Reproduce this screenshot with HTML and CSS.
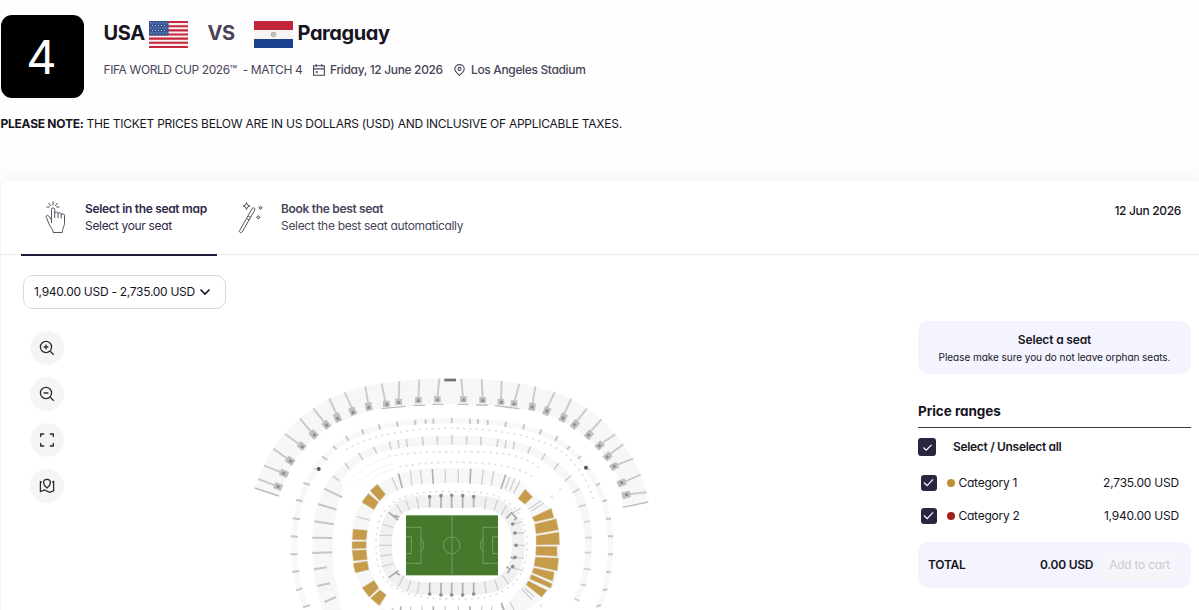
FILE: index.html
```html
<!DOCTYPE html>
<html lang="en">
<head>
<meta charset="UTF-8">
<title>USA vs Paraguay - Seat selection</title>
<meta name="viewport" content="width=device-width, initial-scale=1.0">
<link rel="stylesheet" href="styles.css">
</head>
<body>

<header class="match">
    <div class="match-number">4</div>
    <div class="match-info">
        <h1 class="teams">
            <span class="team-home">USA</span>
            <svg class="flag" viewBox="0 0 39 27" preserveAspectRatio="none">
                <rect width="39" height="27" fill="#f6eef0"/>
                <path d="M0 1h39M0 5.2h39M0 9.4h39M0 13.5h39M0 17.6h39M0 21.8h39M0 26h39" stroke="#c5283d" stroke-width="2.1"/>
                <rect width="19.5" height="14.5" fill="#36548f"/>
                <path d="M1.5 2h17M3 4.5h15M1.5 7h17M3 9.5h15M1.5 12h17" stroke="#b9c7e2" stroke-width="1" stroke-dasharray="1 2"/>
            </svg>
            <span class="vs">VS</span>
            <svg class="flag" viewBox="0 0 39 27" preserveAspectRatio="none">
                <rect width="39" height="27" fill="#f5f5f6"/>
                <rect width="39" height="9" fill="#c2243c"/>
                <rect y="18" width="39" height="9" fill="#1b418c"/>
                <circle cx="19.5" cy="13.5" r="2.3" fill="#d5dbc9" stroke="#8d9688" stroke-width=".8"/>
                <circle cx="19.5" cy="13.5" r=".8" fill="#8b8f4c"/>
            </svg>
            <span class="team-away">Paraguay</span>
        </h1>
        <div class="details">
            <span class="competition">FIFA WORLD CUP 2026™ &nbsp;- MATCH 4</span>
            <svg class="icon-date" viewBox="0 0 12 12">
                <path d="M.6 1.7h10.8v9.6H.6zM.6 4.9h10.8M3.2 0v3M8.8 0v3"/>
                <path d="M2.8 7.2h2v1.6h-2z" class="solid"/>
            </svg>
            <span class="date">Friday, 12 June 2026</span>
            <svg class="icon-pin" viewBox="0 0 11 12">
                <path d="M5.5 11.4C3 9.2.8 7.2.8 4.9a4.7 4.3 0 0 1 9.4 0C10.2 7.2 8 9.2 5.5 11.4z"/>
                <circle cx="5.5" cy="4.9" r="1.5"/>
            </svg>
            <span class="venue">Los Angeles Stadium</span>
        </div>
    </div>
</header>

<p class="note"><b>PLEASE NOTE:</b> THE TICKET PRICES BELOW ARE IN US DOLLARS (USD) AND INCLUSIVE OF APPLICABLE TAXES.</p>

<main class="panel">
    <nav class="tabs">
        <div class="tab active">
            <svg class="icon-hand" viewBox="0 0 22 34">
                <path d="M6.5 22V8.5a1.6 1.6 0 0 1 3.2 0V17M9.7 12.5c0-2 3.3-2 3.3 0V17M13 13c0-1.7 3.2-1.7 3.2 0v4.5M16.2 14c0-1.5 3.3-1.5 3.3.3v8.2c0 2.5-1.8 3.5-2.2 9H8.2c-.2-3.5-2.5-4.5-3.7-7.5L1.3 16.5c-.8-2 1.5-3 2.6-1.3L6.5 19"/>
                <path d="M8 .5v4M3.5 2l2.3 3M12.5 2l-2.3 3M1.5 6h3.2M14.5 6h-3.2"/>
            </svg>
            <div class="tab-text">
                <strong>Select in the seat map</strong>
                <span>Select your seat</span>
            </div>
        </div>
        <div class="tab">
            <svg class="icon-wand" viewBox="0 0 26 34">
                <path d="M14.3 7.3c.9-1.3 3.3.1 2.5 1.6L4.2 31c-1 1.6-3.5.2-2.6-1.4zM8.5 17.5l2.7 1.5M10 15l2.7 1.5"/>
                <path d="M8.5 1.5l1 2.5 2.5 1-2.5 1-1 2.5-1-2.5-2.5-1 2.5-1zM22.5 5l.6 1.2 1.2.6-1.2.6-.6 1.2-.6-1.2-1.2-.6 1.2-.6zM20.3 14.5l.6 1.2 1.2.6-1.2.6-.6 1.2-.6-1.2-1.2-.6 1.2-.6z"/>
            </svg>
            <div class="tab-text">
                <strong>Book the best seat</strong>
                <span>Select the best seat automatically</span>
            </div>
        </div>
        <time class="tab-date">12 Jun 2026</time>
    </nav>

    <div class="content">
        <section class="map-side">
            <button class="price-filter">1,940.00 USD - 2,735.00 USD
                <svg viewBox="0 0 12 8"><path d="M1.5 1.5L6 6l4.5-4.5"/></svg>
            </button>

            <div class="map-row">
                <div class="map-tools">
                    <button><svg viewBox="0 0 16 16"><circle cx="7" cy="7" r="5.6"/><path d="M11.2 11.2l3.6 3.6M7 4.6v4.8M4.6 7h4.8"/></svg></button>
                    <button><svg viewBox="0 0 16 16"><circle cx="7" cy="7" r="5.6"/><path d="M11.2 11.2l3.6 3.6M4.6 7h4.8"/></svg></button>
                    <button><svg viewBox="0 0 16 16"><path d="M1.7 5V2h3.5M10.8 2h3.5v3M14.3 11v3h-3.5M5.2 14H1.7v-3"/></svg></button>
                    <button><svg viewBox="0 0 16 16"><path d="M8 10C6.2 8.6 4.6 7 4.6 4.8a3.4 3.4 0 0 1 6.8 0C11.4 7 9.8 8.6 8 10zM3 4.3l-1.6-.6v9.8L5.5 12l5 2.3 4.1-1.5V3.5L13 4"/></svg></button>
                </div>

                <svg class="stadium" viewBox="0 0 1260 735">
                    <!-- upper tier -->
                    <path class="stand" d="M45 368L55 340 72 300 100 250 135 205 180 160 220 130 268 100 313 82 375 63 425 55 478 48 538 43 600 40H664L724 43 784 48 838 55 887 65 944 80 993 100 1041 130 1084 162 1126 208 1150 238 1179 280 1202 328 1220 380 1224 411 1148 427 1143 360 1125 318 1102 285 1080 255 1047 225 1005 190 970 170 925 150 885 138 835 130 780 124 740 120 682 118H606L550 120 495 125 440 130 390 138 345 152 300 170 265 188 230 215 195 248 160 290 140 330 125 370 117 393z"/>
                    <path class="rows" d="M430 72Q630 40 840 72M433 86Q630 56 838 86M436 100Q630 72 836 100M440 113Q630 88 834 113M170 180Q250 115 360 78M190 200Q275 130 375 95M205 214Q290 145 385 112M1080 175Q1010 110 905 78M1065 195Q990 128 895 95M1050 210Q975 145 890 112M75 345Q105 270 150 215M100 360Q125 290 175 235M1185 350Q1160 285 1115 225M1165 360Q1135 290 1090 240"/>
                    <path class="aisle" d="M55 342L105 361M72 302L122 321M100 251L142 281M135 207L178 238M180 161L214 201M220 130L253 172M268 101L291 150M314 82L336 130M376 64L385 118M425 56L436 110M478 48L476 105M538 44L535 99M598 41L592 98M664 42L669 98M725 43L728 98M785 48L783 105M838 56L823 110M886 65L877 118M944 82L922 128M993 102L971 150M1041 131L1007 172M1084 163L1049 203M1126 208L1082 237M1150 238L1106 270M1179 281L1127 301M1202 329L1149 352M1220 382L1165 388"/>
                    <path class="vomitory" d="M103 360L126 369M120 320L144 330M140 280L161 295M176 236L194 250M212 199L230 217M251 170L267 188M287 146L298 170M333 128L343 150M384 113L388 137M439 107V126M476 101V120M535 96V115M592 94V112M670 94V112M728 96V114M783 101V119M822 106V124M878 114L875 137M925 127L915 150M975 147L964 170M1013 168L996 189M1055 200L1039 219M1088 233L1070 250M1112 266L1094 282M1133 299L1112 310M1157 349L1133 358M1171 386L1146 393"/>
                    <path class="vomitory-hole" d="M110 363l8 4M127 323l8 4M148 286l8 5M184 243l6 5M220 207l6 6M257 177l6 7M291 156l4 9M337 138l4 9M386 123v8M441 114v8M476 109v7M535 103v8M593 101v8M671 101v8M728 103v8M784 108v8M822 113v8M877 122l-1 8M922 134l-3 9M971 155l-4 8M1006 176l-5 6M1048 207l-5 6M1082 240l-7 5M1105 273l-6 5M1126 302l-7 4M1149 352l-8 3M1164 388l-9 2"/>
                    <path class="rail" d="M424 131L496 124M520 121H555M577 118H609M654 118H686M708 120H743M765 122L838 131M44 369L117 393M1148 427L1225 411"/>
                    <path class="booth" d="M613 45H648"/>

                    <!-- suites -->
                    <path class="ring thin" d="M200 728C175 675 162 610 162 540C162 440 190 350 260 273C335 190 470 167 635 167S930 190 1010 273C1080 350 1112 440 1112 540C1112 610 1100 670 1075 728"/>
                    <path class="tick" d="M189 727L210 720M168 676L188 670M156 621L178 618M152 568H173M152 514L174 515M158 460L180 463M168 405L188 409M190 354L210 360M246 274L262 285M279 244L290 253M317 213L326 227M366 193L371 208M417 178L420 194M471 170L473 185M526 164V180M557 163V176M580 161V176M635 159V175M690 161V176M714 163V176M743 165V180M798 170L796 186M852 178L850 193M904 193L899 208M953 214L945 227M990 244L981 253M1023 273L1014 281M1080 355L1068 361M1101 406L1087 409M1113 461H1098M1119 514H1104M1119 568H1104M1112 620L1098 621M1102 673L1088 676M1082 720L1069 725"/>
                    <circle class="dot" cx="236" cy="312" r="6"/>
                    <circle class="dot" cx="1038" cy="308" r="6"/>
                    <path class="tick thin-tick" d="M218 309L232 315M1043 311L1050 315"/>
                    <path class="beads" d="M318 255C400 205 520 190 635 190S865 205 950 250C1000 280 1040 335 1062 405"/>
                    <path class="beads" d="M445 274C530 258 740 252 828 273C860 282 880 295 900 310"/>
                    <path class="beads" d="M478 306C560 288 720 286 805 306C845 315 865 325 880 336"/>
                    <path class="row-line" d="M325 350C370 305 405 287 445 278M345 360C390 320 420 305 455 298M365 365C400 335 430 322 462 312"/>

                    <!-- middle tier -->
                    <path class="stand" d="M250 735C225 680 217 610 217 540C217 470 230 410 258 360C290 305 340 270 400 245C470 218 560 212 635 212S800 216 875 245C935 270 985 315 1020 373C1045 420 1056 480 1056 540C1056 610 1040 665 1010 715L1000 700C1025 655 1035 600 1035 540C1035 485 1020 430 998 383C965 330 920 290 863 265C800 242 710 240 635 240S470 246 410 265C360 285 330 310 306 345C310 360 306 390 300 400C285 440 278 500 278 540C278 600 285 660 305 735z"/>
                    <path class="rows" d="M230 500Q235 430 275 375M244 505Q250 435 285 385M258 508Q262 440 296 390M228 580Q232 650 260 705M243 580Q248 645 272 700M258 580Q262 640 285 692"/>
                    <path class="tick" d="M253 371L307 397M234 417L290 434M223 469L282 478M217 518L277 519M217 564L277 562M222 613L260 607M232 663L270 655M254 711L288 696"/>
                    <path class="tick soft" d="M278 333L298 347M315 294L328 313M356 264L369 285M400 246L411 266M448 229L453 254M474 225L477 250M499 222L502 246M547 215L550 241M592 213V239M636 211V238M680 213V239M723 215V241M774 222L771 246M799 226L795 250M823 230L820 254M872 245L863 266M916 265L904 286M956 294L942 314M993 332L975 348M1018 372L998 383M1038 419L1015 426M1051 468L1032 471M1055 518H1036M1052 563H1034M1052 614L1031 611M1039 661L1022 658M1020 707L1003 701"/>
                    <circle class="bead" cx="935" cy="395" r="4"/>
                    <circle class="bead" cx="961" cy="373" r="4"/>
                    <circle class="bead" cx="903" cy="722" r="4"/>

                    <!-- lower bowl -->
                    <path class="stand bowl" d="M418 722L365 665C330 600 325 490 350 435L420 357C500 310 540 310 635 310S780 312 850 360L925 425C970 480 970 620 935 670L905 700 860 735H418L440 690C400 660 380 600 380 540S395 430 440 395C490 356 550 354 635 354S760 356 830 395C870 425 888 480 888 540S870 640 830 680L790 735H440z"/>
                    <path class="tick thin-tick" d="M351 455L390 466M455 337L474 377M511 315L516 362M541 314L546 358M616 312V354M655 312V354M730 313L725 360M761 317L754 362M810 335L796 372M825 339L809 377M840 347L821 385M866 432L904 407M874 438L912 414M845 672L876 704M853 668L884 697M454 728L460 735M512 725V735M546 724V735M616 723V735M655 723V735M725 723V735M755 724V735M783 722L790 735M810 712L822 735"/>
                    <path class="tick dark" d="M475 325L487 370M577 312L580 357M692 311L690 356M797 329L783 371M482 724V735M580 724V735M690 724V735M784 713L792 735"/>
                    <g class="gold">
                        <path d="M412 357L437 388 419 408 390 377z"/>
                        <path d="M385 385L416 411 402 434 365 412z"/>
                        <path d="M339 492L382 496 379 525 337 524z"/>
                        <path d="M336 530L379 529V550L336 552z"/>
                        <path d="M336 556L379 554 382 584 340 588z"/>
                        <path d="M339 595L382 588 387 614 346 624z"/>
                        <path d="M366 668L402 646 417 669 388 697z"/>
                        <path d="M420 674L439 690 418 722 391 700z"/>
                        <path d="M855 372L878 396 855 418 834 401z"/>
                        <path d="M876 457L934 430 942 458 884 471z"/>
                        <path d="M884 477L949 461 956 495 888 507z"/>
                        <path d="M888 512L957 501 959 539 888 540z"/>
                        <path d="M888 544L951 544 952 574 887 571z"/>
                        <path d="M886 576L956 579 952 618 882 603z"/>
                        <path d="M881 608L943 621 938 649 876 623z"/>
                        <path d="M874 628L937 656 932 670 869 642z"/>
                        <path d="M865 647L921 676 905 697 858 659z"/>
                    </g>
                    <path class="beads" d="M432 640C400 600 400 480 432 440C480 385 530 380 635 380S760 382 815 420C875 470 878 610 815 660C760 700 730 702 635 702S480 690 432 640"/>

                    <!-- pitch side -->
                    <path class="pitch-stand" d="M540 410C470 415 437 455 437 540S470 662 540 670H720C795 665 835 620 835 540S795 415 720 410z"/>
                    <path class="tick thin-tick" d="M428 478L461 488M418 511H455M417 541H454M419 573L456 569M426 605L460 596M470 419L487 447M497 405L509 436M530 397L536 432M738 397L734 434M772 405L762 437M799 421L784 449M815 446L842 430M475 664L492 632M502 678L513 647M532 685L538 651M733 649L739 685M765 645L775 677M787 630L806 658M815 478L848 470M818 504H853M820 541H856M818 577L852 580M815 607L848 617"/>
                    <path class="tick dark" d="M569 392V427M603 390V430M635 390V430M668 390V430M701 392V427M569 653V690M603 653V692M635 653V692M668 653V692M701 653V690"/>
                    <path class="knots" d="M569 395h.1M603 392h.1M635 391h.1M668 392h.1M701 395h.1M569 687h.1M603 690h.1M635 690h.1M668 690h.1M701 687h.1M818 477h.1M825 504h.1M828 541h.1M825 577h.1M818 605h.1"/>
                    <path class="stairs" d="M446 442L475 465M464 452l14 4M446 638L475 617M464 622l15 8M799 460L814 444 829 459 823 466M799 605L810 612 803 625M812 576L824 582"/>

                    <rect class="pitch" x="498" y="451" width="276" height="180"/>
                    <path class="lines" d="M636 451V631M498 487H543V595H498M498 515H514V566H498M774 487H729V595H774M774 515H758V566H774M543 521C554 530 554 551 543 560M729 521C718 530 718 551 729 560"/>
                    <circle class="lines" cx="635" cy="541" r="25"/>
                </svg>
            </div>
        </section>

        <aside class="sidebar">
            <div class="hint">
                <strong>Select a seat</strong>
                <span>Please make sure you do not leave orphan seats.</span>
            </div>

            <h2>Price ranges</h2>
            <div class="range all">
                <span class="check"><svg viewBox="0 0 12 10"><path d="M1.5 5l3 3 6-6"/></svg></span>
                <b>Select / Unselect all</b>
            </div>
            <div class="range">
                <span class="check"><svg viewBox="0 0 12 10"><path d="M1 5l3.5 3.5L11 1.5"/></svg></span>
                <i class="swatch cat1"></i>
                <span>Category 1</span>
                <span class="price">2,735.00 USD</span>
            </div>
            <div class="range">
                <span class="check"><svg viewBox="0 0 12 10"><path d="M1 5l3.5 3.5L11 1.5"/></svg></span>
                <i class="swatch cat2"></i>
                <span>Category 2</span>
                <span class="price">1,940.00 USD</span>
            </div>

            <div class="total">
                <b>TOTAL</b>
                <b class="amount">0.00 USD</b>
                <button class="add-to-cart" disabled>Add to cart</button>
            </div>
        </aside>
    </div>
</main>

</body>
</html>
```
FILE: styles.css
```css
:root{
    --ink:#17151f;
    --purple:#4a4459;
    --dark:#2b2640;
    --lilac:#f4f4fe;
    --gold:#c69c4b;
}

*{
    box-sizing:border-box;
}

body{
    margin:0;
    height:610px;
    overflow:hidden;
    background:#fefefe;
    color:var(--ink);
    font-family:"Inter", sans-serif;
    font-feature-settings:"cv11";
    font-size:12px;
    line-height:16px;
    letter-spacing:-.25px;
}

svg{
    display:block;
    flex:none;
    fill:none;
}

button{
    font:inherit;
    font-feature-settings:inherit;
    letter-spacing:inherit;
    color:inherit;
    border:none;
    padding:0;
}

/* match header */
.match{
    display:flex;
    gap:20px;
    padding:15px 0 0 .5px;
}

.match-number{
    width:83px;
    height:83px;
    padding-right:2px;
    border-radius:11px;
    background:#000;
    color:#fff;
    font-size:47px;
    line-height:83px;
    text-align:center;
    letter-spacing:-1px;
}

.teams{
    display:flex;
    align-items:center;
    height:27px;
    margin:5px 0 0;
    font-size:20px;
    font-weight:700;
    line-height:24px;
    letter-spacing:-.4px;
}

.teams span{
    margin-top:-1px;
}

.flag{
    width:39px;
    height:27px;
    margin-top:2px;
}

.team-home{
    width:45px;
}

.vs{
    width:66px;
    padding-left:20px;
    color:var(--purple);
}

.team-away{
    margin-left:5px;
}

.details{
    display:flex;
    align-items:center;
    margin-top:15px;
    color:var(--purple);
    letter-spacing:-.35px;
    white-space:nowrap;
}

.competition{
    width:209px;
    letter-spacing:-.4px;
}

.icon-date,
.icon-pin{
    height:12px;
    stroke:var(--purple);
    stroke-width:1.1;
}

.icon-date{
    width:12px;
    margin-right:5.5px;
}

.icon-date .solid{
    fill:var(--purple);
    stroke:none;
}

.date,
.venue{
    font-weight:500;
}

.date{
    width:124px;
}

.icon-pin{
    width:11px;
    margin-right:6px;
}

.note{
    margin:18px 0 0 .5px;
}

/* main panel */
.panel{
    margin-top:49px;
    border-left:1px solid #f3f3f6;
    border-radius:8px 0 0 0;
    background:#fff;
    box-shadow:0 -6px 12px rgba(90,90,150,.05);
}

.tabs{
    display:flex;
    height:74px;
    padding-left:20px;
    border-bottom:1px solid #ececef;
}

.tab{
    display:flex;
    height:75px;
    padding-top:20px;
    color:var(--purple);
}

.tab.active{
    width:196px;
    padding-left:24px;
    border-bottom:2px solid #211a38;
    color:#30294a;
}

.tab-text{
    display:flex;
    flex-direction:column;
    gap:1px;
    letter-spacing:-.32px;
}

.tab-text strong{
    font-weight:600;
}

.icon-hand{
    width:22px;
    height:34px;
    margin-right:18px;
    stroke:#55515f;
    stroke-width:1;
}

.icon-wand{
    width:26px;
    height:34px;
    margin:0 17px 0 21px;
    stroke:#55515f;
    stroke-width:1;
}

.tab-date{
    margin:22px 18px 0 auto;
    font-weight:500;
    letter-spacing:-.33px;
}

.content{
    display:flex;
}

.map-side{
    flex:1;
    padding:20px 0 0 22px;
}

.price-filter{
    display:flex;
    align-items:center;
    gap:4px;
    width:203px;
    height:34px;
    padding-left:10px;
    border:1px solid #d9d9dd;
    border-radius:10px;
    background:#fff;
    letter-spacing:-.28px;
}

.price-filter svg{
    width:12px;
    height:8px;
    stroke:var(--ink);
    stroke-width:1.6;
}

.map-row{
    display:flex;
    gap:176px;
    padding-left:7px;
}

.map-tools{
    display:flex;
    flex-direction:column;
    gap:12px;
    padding-top:22px;
}

.map-tools button{
    display:grid;
    place-items:center;
    width:34px;
    height:34px;
    border-radius:50%;
    background:#f5f5f6;
}

.map-tools svg{
    width:16px;
    height:16px;
    stroke:#2c2b31;
    stroke-width:1.3;
}

/* stadium */
.stadium{
    width:420px;
    height:245px;
    margin-top:56px;
}

.stand{
    fill:#f7f7f7;
}

.bowl{
    fill-rule:evenodd;
}

.rows{
    stroke:#eeeeee;
    stroke-width:2;
    stroke-dasharray:3 3;
}

.row-line{
    stroke:#f5f5f5;
    stroke-width:3;
}

.aisle{
    stroke:#cbcbcb;
    stroke-width:6;
}

.vomitory{
    stroke:#c0c0c0;
    stroke-width:20;
}

.vomitory-hole{
    stroke:#8b8b8b;
    stroke-width:8;
}

.rail{
    stroke:#bdbdbd;
    stroke-width:4;
}

.booth{
    stroke:#6f6f6f;
    stroke-width:8;
}

.ring.thin{
    stroke:#f8f8f8;
    stroke-width:16;
}

.tick{
    stroke:#c6c6c6;
    stroke-width:6;
}

.tick.soft{
    stroke:#d0d0d0;
    stroke-width:5;
}

.tick.thin-tick{
    stroke:#d0d0d0;
    stroke-width:4;
}

.tick.dark{
    stroke:#b0b0b0;
    stroke-width:5;
}

.dot{
    fill:#555;
}

.beads{
    stroke:#e2e2e2;
    stroke-width:5;
    stroke-dasharray:7 12;
}

.bead{
    fill:#e6e6e6;
}

.gold{
    fill:var(--gold);
    stroke:#ddd3bf;
    stroke-width:1.5;
}

.pitch-stand{
    stroke:#f1f1f1;
    stroke-width:38;
}

.knots{
    stroke:#8e8e8e;
    stroke-width:11;
    stroke-linecap:round;
}

.stairs{
    stroke:#a8a8a8;
    stroke-width:5;
}

.pitch{
    fill:#47792c;
}

.lines{
    stroke:#80a56b;
    stroke-width:2.5;
}

/* sidebar */
.sidebar{
    width:281px;
    padding:66px 8px 0 0;
}

.hint{
    display:flex;
    flex-direction:column;
    align-items:center;
    height:53px;
    padding-top:11px;
    border-radius:10px;
    background:var(--lilac);
}

.hint strong{
    font-weight:600;
    letter-spacing:-.15px;
}

.hint span{
    margin-top:1px;
    font-size:10px;
    letter-spacing:-.04px;
}

.sidebar h2{
    height:26px;
    margin:28px 0 0;
    border-bottom:1px solid #3b3846;
    font-size:13.5px;
    font-weight:700;
    line-height:18px;
    letter-spacing:-.05px;
}

.range{
    display:flex;
    align-items:center;
    height:33px;
    padding:0 12px 0 2.5px;
}

.range.all{
    height:38px;
    padding-left:0;
}

.range b{
    font-weight:600;
    letter-spacing:-.32px;
}

.range.all .check{
    width:18px;
    height:18px;
    margin-right:17px;
}

.check{
    display:grid;
    place-items:center;
    width:16px;
    height:16px;
    margin-right:10px;
    border-radius:3px;
    background:var(--dark);
}

.check svg{
    width:11px;
    height:9px;
    stroke:#fff;
    stroke-width:1.3;
}

.swatch{
    width:8px;
    height:8px;
    margin-right:4px;
    border-radius:50%;
}

.cat1{ background:#c08f35; }
.cat2{ background:#a31d1d; }

.price{
    margin-left:auto;
    letter-spacing:-.22px;
}

.total{
    display:flex;
    align-items:center;
    height:46px;
    margin-top:10px;
    padding:0 12px 0 10px;
    border-radius:10px;
    background:var(--lilac);
}

.total b{
    font-weight:600;
}

.amount{
    margin-left:auto;
}

.add-to-cart{
    height:30px;
    margin-left:8px;
    padding:0 9px 0 8px;
    border-radius:6px;
    background:#f5f5fa;
    color:#cbcbd4;
}
```
